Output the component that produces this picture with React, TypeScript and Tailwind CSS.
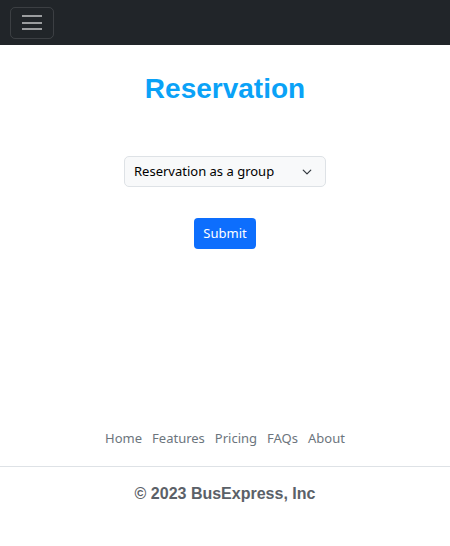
import React from "react";

export default function App() {
  return (
    <div className="min-h-[546px] w-[450px] bg-white flex flex-col" style={{ fontFamily: '"Noto Sans", "Open Sans", sans-serif' }}>
      <nav className="h-[45px] bg-[#212529] flex items-center px-[10px]">
        <button className="w-[44px] h-[32px] border border-[rgba(255,255,255,0.12)] rounded-[5px] flex flex-col items-center justify-center gap-[4.5px]">
          <span className="block w-[20px] h-[2px] bg-[#9b9d9f]" />
          <span className="block w-[20px] h-[2px] bg-[#9b9d9f]" />
          <span className="block w-[20px] h-[2px] bg-[#9b9d9f]" />
        </button>
      </nav>
      <main className="flex flex-col items-center">
        <h1 className="mt-[24px] text-[28px] leading-[40px] font-bold text-[#0aa2f7]" style={{ fontFamily: '"Liberation Sans", Arial, sans-serif' }}>
          Reservation
        </h1>
        <div className="mt-[47px] w-[202px] h-[31px] bg-[#f8f9fa] border border-[#dee2e6] rounded-[5px] flex items-center justify-between pl-[9px] pr-[13px]">
          <span className="text-[13px] text-black">Reservation as a group</span>
          <svg width="10" height="10" viewBox="0 0 16 16" fill="none" stroke="#343a40" strokeWidth="2" strokeLinecap="round" strokeLinejoin="round">
            <path d="m2 5 6 6 6-6" />
          </svg>
        </div>
        <button className="mt-[31px] w-[62px] h-[31px] bg-[#0d6efd] text-white text-[13px] rounded-[4px]">
          Submit
        </button>
      </main>
      <footer className="mt-auto pb-[40px]">
        <div className="flex justify-center gap-[10px] text-[13px] text-[#6c757d] pb-[18px]">
          <span>Home</span>
          <span>Features</span>
          <span>Pricing</span>
          <span>FAQs</span>
          <span>About</span>
        </div>
        <div className="border-t border-[#dee2e6]" />
        <p className="mt-[15px] text-center text-[16px] font-bold text-[#5b6168]" style={{ fontFamily: '"Liberation Sans", Arial, sans-serif' }}>
          © 2023 BusExpress, Inc
        </p>
      </footer>
    </div>
  );
}
